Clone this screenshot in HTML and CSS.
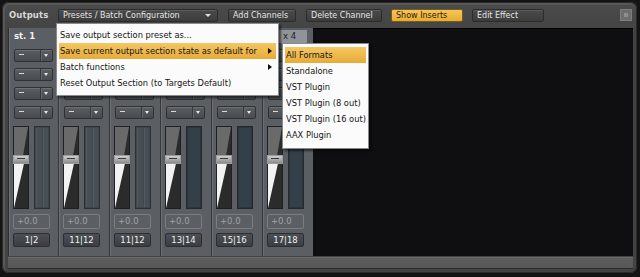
FILE: index.html
```html
<!DOCTYPE html>
<html>
<head>
<meta charset="utf-8">
<link rel="stylesheet" href="styles.css">
</head>
<body>
<div class="window">
  <div class="topbar">
    <span class="title">Outputs</span>
    <div class="btn dd">Presets / Batch Configuration<span class="caret"></span></div>
    <div class="btn add">Add Channels</div>
    <div class="btn del">Delete Channel</div>
    <div class="btn on ins">Show Inserts</div>
    <div class="btn eff">Edit Effect</div>
    <div class="close"></div>
  </div>
  <div class="content">
    <div class="strip first">
      <div class="head">st. 1</div>
      <div class="sel"><span class="dash"></span><span class="arr"></span></div>
      <div class="sel"><span class="dash"></span><span class="arr"></span></div>
      <div class="sel"><span class="dash"></span><span class="arr"></span></div>
      <div class="sel"><span class="dash"></span><span class="arr"></span></div>
      <div class="faders">
        <div class="fader"><svg width="16" height="83" viewBox="0 0 16 83"><polygon points="1,1 15,1 1,82" fill="#6a6a6a"/><polygon points="1,33 12,33 1,82" fill="#f2f2f2"/></svg><div class="knob"></div></div>
        <div class="meter"><span></span><span></span></div>
      </div>
      <div class="val">+0.0</div>
      <div class="ch">1|2</div>
    </div>
    <div class="strip">
      <div class="head"></div>
      <div class="sel"><span class="dash"></span><span class="arr"></span></div>
      <div class="sel"><span class="dash"></span><span class="arr"></span></div>
      <div class="sel"><span class="dash"></span><span class="arr"></span></div>
      <div class="sel"><span class="dash"></span><span class="arr"></span></div>
      <div class="faders">
        <div class="fader"><svg width="16" height="83" viewBox="0 0 16 83"><polygon points="1,1 15,1 1,82" fill="#6a6a6a"/><polygon points="1,33 12,33 1,82" fill="#f2f2f2"/></svg><div class="knob"></div></div>
        <div class="meter"><span></span><span></span></div>
      </div>
      <div class="val">+0.0</div>
      <div class="ch">11|12</div>
    </div>
    <div class="strip">
      <div class="head"></div>
      <div class="sel"><span class="dash"></span><span class="arr"></span></div>
      <div class="sel"><span class="dash"></span><span class="arr"></span></div>
      <div class="sel"><span class="dash"></span><span class="arr"></span></div>
      <div class="sel"><span class="dash"></span><span class="arr"></span></div>
      <div class="faders">
        <div class="fader"><svg width="16" height="83" viewBox="0 0 16 83"><polygon points="1,1 15,1 1,82" fill="#6a6a6a"/><polygon points="1,33 12,33 1,82" fill="#f2f2f2"/></svg><div class="knob"></div></div>
        <div class="meter"><span></span><span></span></div>
      </div>
      <div class="val">+0.0</div>
      <div class="ch">11|12</div>
    </div>
    <div class="strip">
      <div class="head"></div>
      <div class="sel"><span class="dash"></span><span class="arr"></span></div>
      <div class="sel"><span class="dash"></span><span class="arr"></span></div>
      <div class="sel"><span class="dash"></span><span class="arr"></span></div>
      <div class="sel"><span class="dash"></span><span class="arr"></span></div>
      <div class="faders">
        <div class="fader"><svg width="16" height="83" viewBox="0 0 16 83"><polygon points="1,1 15,1 1,82" fill="#6a6a6a"/><polygon points="1,33 12,33 1,82" fill="#f2f2f2"/></svg><div class="knob"></div></div>
        <div class="meter blue"><span></span></div>
      </div>
      <div class="val">+0.0</div>
      <div class="ch">13|14</div>
    </div>
    <div class="strip">
      <div class="head"></div>
      <div class="sel"><span class="dash"></span><span class="arr"></span></div>
      <div class="sel"><span class="dash"></span><span class="arr"></span></div>
      <div class="sel"><span class="dash"></span><span class="arr"></span></div>
      <div class="sel"><span class="dash"></span><span class="arr"></span></div>
      <div class="faders">
        <div class="fader"><svg width="16" height="83" viewBox="0 0 16 83"><polygon points="1,1 15,1 1,82" fill="#6a6a6a"/><polygon points="1,33 12,33 1,82" fill="#f2f2f2"/></svg><div class="knob"></div></div>
        <div class="meter blue"><span></span></div>
      </div>
      <div class="val">+0.0</div>
      <div class="ch">15|16</div>
    </div>
    <div class="strip">
      <div class="head aux">x 4</div>
      <div class="sel"><span class="dash"></span><span class="arr"></span></div>
      <div class="sel"><span class="dash"></span><span class="arr"></span></div>
      <div class="sel"><span class="dash"></span><span class="arr"></span></div>
      <div class="sel"><span class="dash"></span><span class="arr"></span></div>
      <div class="faders">
        <div class="fader"><svg width="16" height="83" viewBox="0 0 16 83"><polygon points="1,1 15,1 1,82" fill="#6a6a6a"/><polygon points="1,33 12,33 1,82" fill="#f2f2f2"/></svg><div class="knob"></div></div>
        <div class="meter blue"><span></span></div>
      </div>
      <div class="val">+0.0</div>
      <div class="ch">17|18</div>
    </div>
  </div>
  <div class="scroll"></div>

  <div class="menu">
    <div class="item">Save output section preset as...</div>
    <div class="item hl">Save current output section state as default for<span class="sub"></span></div>
    <div class="item">Batch functions<span class="sub"></span></div>
    <div class="item">Reset Output Section (to Targets Default)</div>
  </div>
  <div class="menu submenu">
    <div class="item hl">All Formats</div>
    <div class="item">Standalone</div>
    <div class="item">VST Plugin</div>
    <div class="item">VST Plugin (8 out)</div>
    <div class="item">VST Plugin (16 out)</div>
    <div class="item">AAX Plugin</div>
  </div>
</div>
</body>
</html>
```

FILE: styles.css
```css
html, body {
  margin: 0;
  padding: 0;
  background: #141414;
  font-family: "DejaVu Sans", sans-serif;
}
body {
  width: 640px;
  height: 277px;
  overflow: hidden;
  padding-top: 2px;
  box-sizing: border-box;
}
.window {
  position: relative;
  margin-left: 2px;
  width: 635px;
  height: 271px;
  box-sizing: border-box;
  padding: 0 4px 0 6px;
  background: linear-gradient(#4b4b4b, #434343 30px, #434343);
  border-radius: 7px;
  box-shadow: inset 0 0 0 1px #2a2a2a, inset 1px 1px 0 2px #585858;
  display: flex;
  flex-direction: column;
}
.topbar {
  height: 26px;
  display: flex;
  align-items: center;
  flex: none;
}
.title {
  font-size: 8.5px;
  font-weight: bold;
  color: #d8d8d8;
  margin-left: 1px;
  width: 49px;
  letter-spacing: 0.1px;
}
.btn {
  height: 13px;
  box-sizing: border-box;
  border: 1px solid #2c2c2c;
  border-radius: 2px;
  background: linear-gradient(#4a4a4a, #3c3c3c);
  box-shadow: inset 0 1px 0 #5c5c5c;
  color: #e4e4e4;
  font-size: 8px;
  line-height: 11px;
  padding-left: 4px;
  white-space: nowrap;
  overflow: hidden;
  position: relative;
}
.dd { width: 160px; }
.add { width: 68px; margin-left: 10px; }
.del { width: 76px; margin-left: 10px; }
.ins { width: 72px; margin-left: 9px; }
.eff { width: 72px; margin-left: 9px; }
.btn.on {
  background: linear-gradient(#f6c65a, #e9ac32);
  color: #2d2006;
  border-color: #7a5a18;
  box-shadow: none;
}
.caret {
  position: absolute;
  right: 6px;
  top: 4px;
  width: 0;
  height: 0;
  border-left: 3px solid transparent;
  border-right: 3px solid transparent;
  border-top: 3px solid #e0e0e0;
}
.close {
  margin-left: auto;
  margin-right: 1px;
  width: 12px;
  height: 12px;
  background: #6e6e6e;
  border: 1px solid #7e7e7e;
  box-sizing: border-box;
  position: relative;
}
.close::after {
  content: "";
  position: absolute;
  left: 3px;
  top: 3px;
  width: 4px;
  height: 4px;
  background: #8e8e8e;
}
.content {
  height: 228px;
  flex: none;
  background: #0f0e11;
  display: flex;
  align-items: stretch;
  box-shadow: inset 0 1px 0 #000;
}
.strip {
  width: 51px;
  box-sizing: border-box;
  border-left: 1px solid #34373a;
  background: #5b5f63;
  display: flex;
  flex-direction: column;
  padding: 2px 0 0 4px;
  box-shadow: inset 1px 0 0 #6c7074;
}
.strip.first { width: 50px; border-left-color: #2b2d2f; }
.head {
  height: 13px;
  font-size: 8.5px;
  font-weight: bold;
  color: #eef0f2;
  line-height: 13px;
  padding-left: 1px;
  margin-bottom: 6px;
  margin-right: 4px;
}
.head.aux {
  background: #8f9498;
  color: #1e1e1e;
  font-weight: normal;
  padding-left: 16px;
  margin-left: 0;
  margin-right: 6px;
  border-radius: 1px;
}
.sel {
  margin-left: 1px;
  width: 39px;
  height: 13px;
  box-sizing: border-box;
  border: 1px solid #2f3235;
  border-radius: 2px;
  background: linear-gradient(#5a5e62, #484c50);
  box-shadow: inset 0 1px 0 #6d7175;
  display: flex;
  margin-bottom: 6px;
}
.dash {
  flex: 1;
  position: relative;
  border-right: 1px solid #363a3d;
}
.dash::after {
  content: "";
  position: absolute;
  left: 4px;
  top: 4px;
  width: 5px;
  height: 1px;
  background: #d8d8d8;
}
.arr {
  width: 11px;
  position: relative;
  box-shadow: inset 1px 0 0 #62666a;
}
.arr::after {
  content: "";
  position: absolute;
  left: 3px;
  top: 4px;
  border-left: 2.5px solid transparent;
  border-right: 2.5px solid transparent;
  border-top: 3px solid #e8e8e8;
}
.faders {
  display: flex;
  gap: 5px;
  margin-top: 1px;
  height: 83px;
}
.fader {
  width: 16px;
  height: 83px;
  position: relative;
  background: #2b2b2c;
  box-shadow: inset 0 0 0 1px #1f2021;
}
.fader svg { display: block; }
.knob {
  position: absolute;
  left: 0;
  top: 29px;
  width: 16px;
  height: 9px;
  box-sizing: border-box;
  border: 1px solid #9c9c9c;
  background: linear-gradient(#cfcfcf, #8a8a8a);
}
.knob::after {
  content: "";
  position: absolute;
  left: 3px;
  top: 2px;
  width: 8px;
  height: 1px;
  background: #3a3a3a;
}
.meter {
  width: 16px;
  height: 83px;
  box-sizing: border-box;
  border: 1px solid #2b3034;
  background: #40474c;
  display: flex;
  gap: 1px;
  padding: 1px;
}
.meter span {
  flex: 1;
  background: #474f55;
  box-shadow: inset 1px 0 0 #535b61;
}
.meter.blue { background: #2c353c; border-color: #222a30; }
.meter.blue span { background: #33404a; box-shadow: none; }
.val {
  margin-top: 5px;
  width: 37px;
  height: 15px;
  box-sizing: border-box;
  border: 1px solid #7a7e82;
  border-radius: 2px;
  font-size: 8.5px;
  line-height: 13px;
  color: #9ea3a7;
  padding-left: 3px;
}
.ch {
  margin-top: 4px;
  width: 37px;
  height: 14px;
  box-sizing: border-box;
  border: 1px solid #2c2f32;
  border-radius: 2px;
  background: linear-gradient(#4c5054, #3a3d41);
  font-size: 8.5px;
  line-height: 12px;
  color: #eef0f2;
  text-align: center;
}
.scroll {
  margin-top: 1px;
  height: 12px;
  flex: none;
  background: linear-gradient(#5f5f5f, #565656);
  box-shadow: inset 0 1px 0 #6a6a6a, inset 0 -1px 0 #2e2e2e;
}
.menu {
  position: absolute;
  left: 54px;
  top: 21px;
  width: 223px;
  box-sizing: border-box;
  background: #fbfbfb;
  border: 1px solid #8a8a8a;
  box-shadow: 2px 2px 2px rgba(0,0,0,0.55);
  padding: 3px 2px 4px 2px;
}
.item {
  height: 16px;
  line-height: 16px;
  font-size: 8.3px;
  color: #151515;
  padding-left: 1px;
  position: relative;
  white-space: nowrap;
}
.item.hl {
  background: linear-gradient(#f4c763, #e7ab38);
}
.sub {
  position: absolute;
  right: 4px;
  top: 5px;
  border-top: 3px solid transparent;
  border-bottom: 3px solid transparent;
  border-left: 4px solid #111;
}
.submenu {
  left: 280px;
  top: 41px;
  width: 87px;
  padding: 3px 2px 5px 2px;
}
```
